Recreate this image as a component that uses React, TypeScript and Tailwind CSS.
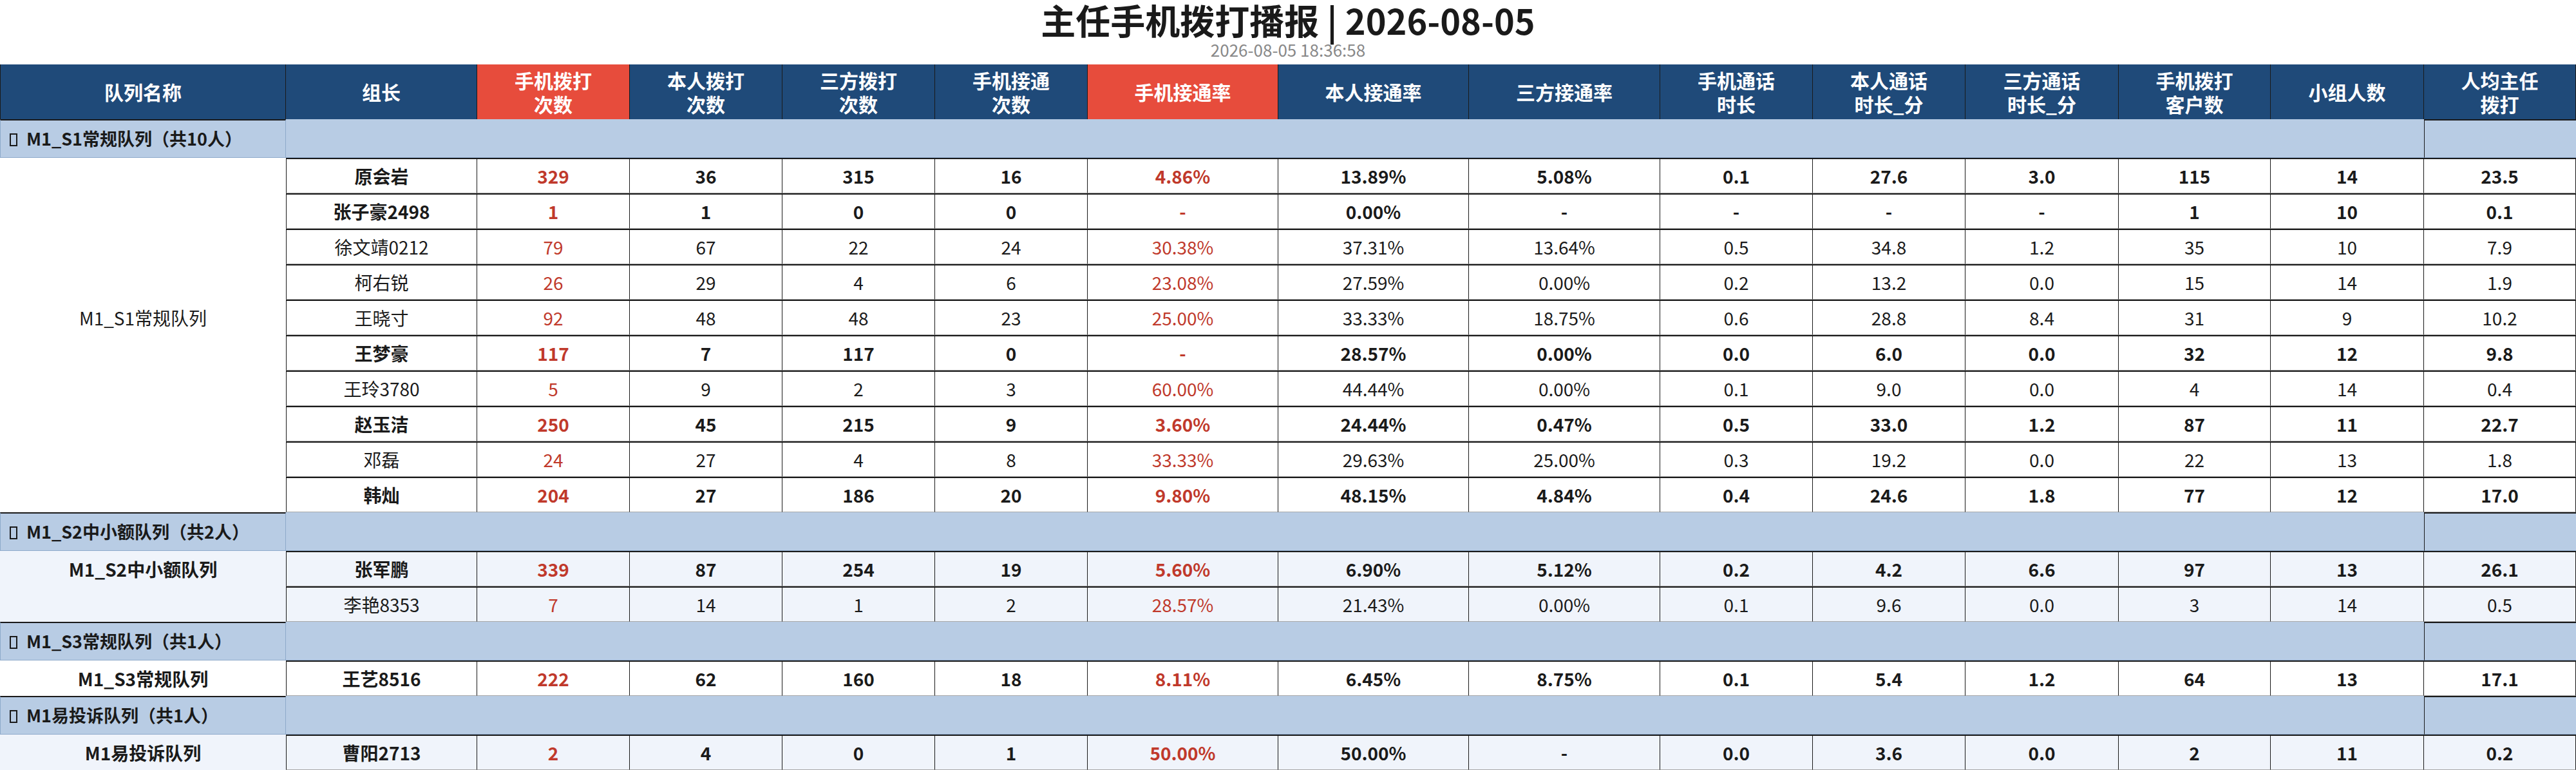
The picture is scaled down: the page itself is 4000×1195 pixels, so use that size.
import React from "react";

type Row = {
    name: string;
    bold: boolean;
    v: string[];
};

type Group = {
    queue: string;
    count: number;
    light: boolean;
    rows: Row[];
};

const headers: { label: string[]; red?: boolean }[] = [
    { label: ["队列名称"] },
    { label: ["组长"] },
    { label: ["手机拨打", "次数"], red: true },
    { label: ["本人拨打", "次数"] },
    { label: ["三方拨打", "次数"] },
    { label: ["手机接通", "次数"] },
    { label: ["手机接通率"], red: true },
    { label: ["本人接通率"] },
    { label: ["三方接通率"] },
    { label: ["手机通话", "时长"] },
    { label: ["本人通话", "时长_分"] },
    { label: ["三方通话", "时长_分"] },
    { label: ["手机拨打", "客户数"] },
    { label: ["小组人数"] },
    { label: ["人均主任", "拨打"] },
];

const colWidths = [
    "w-[444px]", "w-[297px]", "w-[237px]", "w-[237px]", "w-[237px]", "w-[237px]", "w-[296px]", "w-[296px]",
    "w-[297px]", "w-[237px]", "w-[237px]", "w-[238px]", "w-[236px]", "w-[238px]", "w-[236px]",
];

const groups: Group[] = [
    {
        queue: "M1_S1常规队列",
        count: 10,
        light: false,
        rows: [
            { name: "原会岩", bold: true, v: ["329", "36", "315", "16", "4.86%", "13.89%", "5.08%", "0.1", "27.6", "3.0", "115", "14", "23.5"] },
            { name: "张子豪2498", bold: true, v: ["1", "1", "0", "0", "-", "0.00%", "-", "-", "-", "-", "1", "10", "0.1"] },
            { name: "徐文靖0212", bold: false, v: ["79", "67", "22", "24", "30.38%", "37.31%", "13.64%", "0.5", "34.8", "1.2", "35", "10", "7.9"] },
            { name: "柯右锐", bold: false, v: ["26", "29", "4", "6", "23.08%", "27.59%", "0.00%", "0.2", "13.2", "0.0", "15", "14", "1.9"] },
            { name: "王晓寸", bold: false, v: ["92", "48", "48", "23", "25.00%", "33.33%", "18.75%", "0.6", "28.8", "8.4", "31", "9", "10.2"] },
            { name: "王梦豪", bold: true, v: ["117", "7", "117", "0", "-", "28.57%", "0.00%", "0.0", "6.0", "0.0", "32", "12", "9.8"] },
            { name: "王玲3780", bold: false, v: ["5", "9", "2", "3", "60.00%", "44.44%", "0.00%", "0.1", "9.0", "0.0", "4", "14", "0.4"] },
            { name: "赵玉洁", bold: true, v: ["250", "45", "215", "9", "3.60%", "24.44%", "0.47%", "0.5", "33.0", "1.2", "87", "11", "22.7"] },
            { name: "邓磊", bold: false, v: ["24", "27", "4", "8", "33.33%", "29.63%", "25.00%", "0.3", "19.2", "0.0", "22", "13", "1.8"] },
            { name: "韩灿", bold: true, v: ["204", "27", "186", "20", "9.80%", "48.15%", "4.84%", "0.4", "24.6", "1.8", "77", "12", "17.0"] },
        ],
    },
    {
        queue: "M1_S2中小额队列",
        count: 2,
        light: true,
        rows: [
            { name: "张军鹏", bold: true, v: ["339", "87", "254", "19", "5.60%", "6.90%", "5.12%", "0.2", "4.2", "6.6", "97", "13", "26.1"] },
            { name: "李艳8353", bold: false, v: ["7", "14", "1", "2", "28.57%", "21.43%", "0.00%", "0.1", "9.6", "0.0", "3", "14", "0.5"] },
        ],
    },
    {
        queue: "M1_S3常规队列",
        count: 1,
        light: false,
        rows: [
            { name: "王艺8516", bold: true, v: ["222", "62", "160", "18", "8.11%", "6.45%", "8.75%", "0.1", "5.4", "1.2", "64", "13", "17.1"] },
        ],
    },
    {
        queue: "M1易投诉队列",
        count: 1,
        light: true,
        rows: [
            { name: "曹阳2713", bold: true, v: ["2", "4", "0", "1", "50.00%", "50.00%", "-", "0.0", "3.6", "0.0", "2", "11", "0.2"] },
        ],
    },
];

function GroupHeader({ group }: { group: Group }) {
    return (
        <tr>
            <td className="h-[60px] p-0 pl-[14px] bg-[#b8cce4] border-t-2 border-t-[#1a1a1a] border-l border-l-[#8eaacb] border-r border-r-[#8eaacb] border-b border-b-[#8eaacb] text-left text-[27px] font-bold text-[#1a1a1a] whitespace-nowrap">
                <span className="inline-block w-[12px] h-[20px] border-2 border-[#1a1a1a] mr-[14px] align-[-1px]"></span>
                {group.queue}（共{group.count}人）
            </td>
            <td colSpan={13} className="h-[60px] p-0 bg-[#b8cce4] border-b border-b-[#8eaacb]"></td>
            <td className="h-[60px] p-0 bg-[#b8cce4] border-t-2 border-t-[#1a1a1a] border-l border-l-[#1a1a1a] border-b border-b-[#8eaacb]"></td>
        </tr>
    );
}

function DataRow({ group, row, index }: { group: Group; row: Row; index: number }) {
    const bg = group.light ? "bg-[#f0f4fb]" : "bg-white";
    const weight = row.bold ? "font-bold" : "font-normal";
    // queue name sits in the middle row of its group
    const labelRow = Math.floor((group.rows.length - 1) / 2);
    const cell = `h-[55px] p-0 text-center border-t-2 border-t-[#1a1a1a] border-b border-b-[#a8a8a8] border-r border-r-[#1a1a1a] ${bg}`;

    return (
        <tr className={`text-[28px] text-[#1a1a1a] ${weight}`}>
            <td className={`h-[55px] p-0 text-center ${bg}`}>{index === labelRow ? group.queue : ""}</td>
            <td className={`${cell} border-l border-l-[#1a1a1a]`}>{row.name}</td>
            {row.v.map((val, i) => (
                <td key={i} className={`${cell} ${i === 0 || i === 4 ? "text-[#c0392b]" : ""}`}>
                    {val}
                </td>
            ))}
        </tr>
    );
}

export default function App() {
    return (
        <div className="w-[4000px] h-[1195px] bg-white overflow-hidden font-['Noto_Sans_CJK_SC',sans-serif] text-[#1a1a1a]">
            <div className="flex flex-col items-center h-[100px]">
                <h1 className="text-[54px] leading-[62px] font-bold text-[#1a1a1a]">主任手机拨打播报 | 2026-08-05</h1>
                <p className="text-[26px] leading-[30px] text-[#888888]">2026-08-05 18:36:58</p>
            </div>

            <table className="w-[4000px] table-fixed border-separate border-spacing-0">
                <colgroup>
                    {colWidths.map((w, i) => (
                        <col key={i} className={w} />
                    ))}
                </colgroup>
                <thead>
                    <tr>
                        {headers.map((h, i) => (
                            <th
                                key={i}
                                className={`h-[85px] p-0 text-[30px] leading-[37px] font-bold text-white border-r border-r-[#1a1a1a] ${i === 0 ? "border-l border-l-[#1a1a1a]" : ""} ${h.red ? "bg-[#e74c3c]" : "bg-[#1f4a79]"}`}
                            >
                                {h.label.map((l, j) => (
                                    <div key={j}>{l}</div>
                                ))}
                            </th>
                        ))}
                    </tr>
                </thead>
                <tbody>
                    {groups.map((g) => (
                        <React.Fragment key={g.queue}>
                            <GroupHeader group={g} />
                            {g.rows.map((r, i) => (
                                <DataRow key={r.name} group={g} row={r} index={i} />
                            ))}
                        </React.Fragment>
                    ))}
                </tbody>
            </table>
        </div>
    );
}
